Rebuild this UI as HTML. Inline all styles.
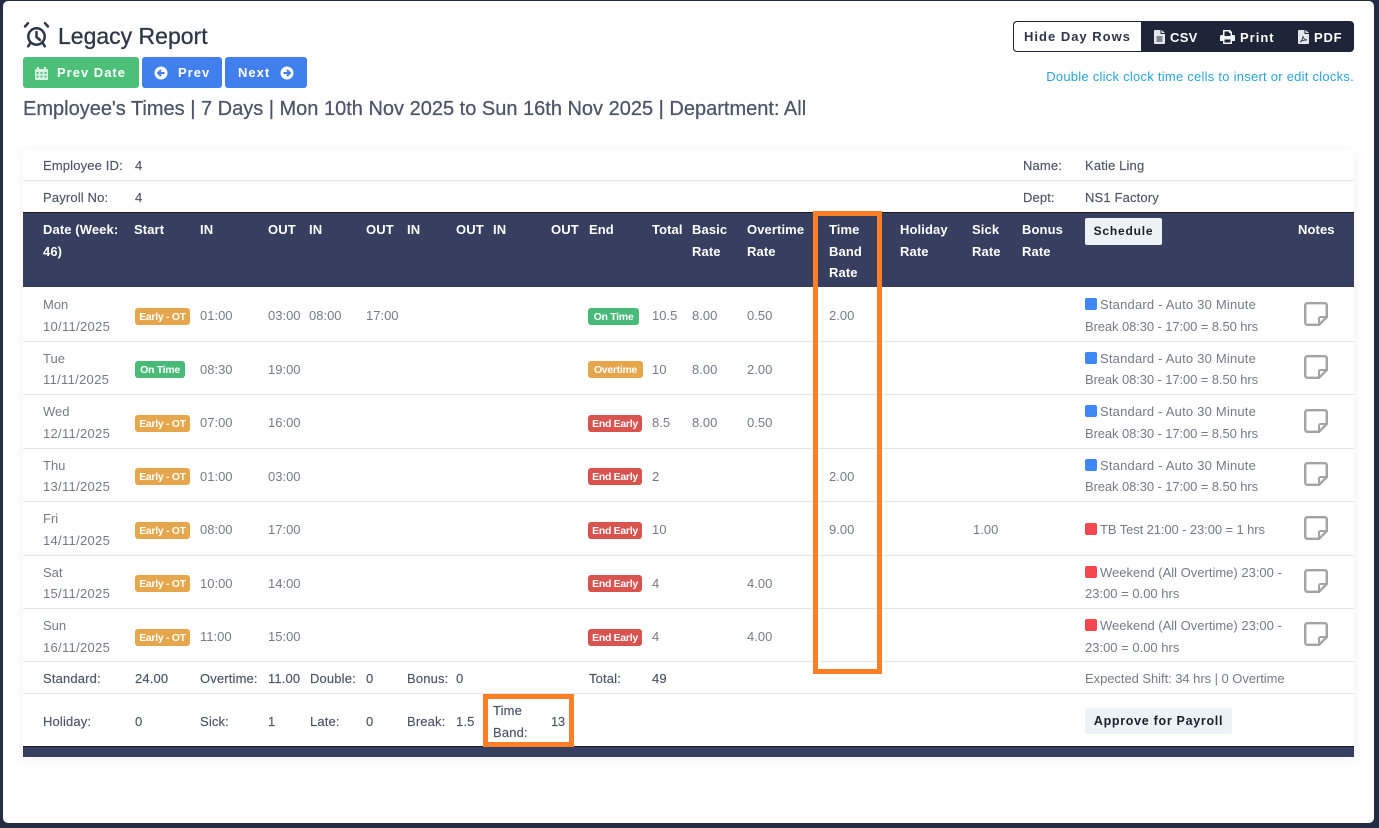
<!DOCTYPE html>
<html>
<head>
<meta charset="utf-8">
<title>Legacy Report</title>
<style>
html,body{margin:0;padding:0;}
body{width:1379px;height:828px;overflow:hidden;background:#232c43;font-family:"Liberation Sans",sans-serif;position:relative;}
#panel{position:absolute;left:3px;top:1px;width:1371px;height:822px;background:#fff;border-radius:5px;}
#card{position:absolute;left:23px;top:150px;width:1331px;height:607px;background:#fff;box-shadow:0 2px 12px rgba(0,0,0,.06);border-radius:4px 4px 0 0;}
.l{position:absolute;left:23px;width:1331px;height:1px;background:#e2e8f0;}
.t{position:absolute;white-space:nowrap;font-size:13px;line-height:20px;height:20px;margin-top:1px;}
.h{color:#fff;font-weight:bold;letter-spacing:.1px;}
.d{color:#747b87;}
.k{color:#4a5568;letter-spacing:.15px;-webkit-text-stroke:.15px #4a5568;}
.s{letter-spacing:.2px;}
.br{letter-spacing:-.1px;}
.dt{letter-spacing:.3px;}
.b{position:absolute;height:17px;line-height:18px;border-radius:3px;color:#fff;font-size:10.500px;font-weight:bold;text-align:center;letter-spacing:-.3px;white-space:nowrap;}
.or{background:#e5a64c;}.gr{background:#48bb78;}.re{background:#d9534f;}
.sq{position:absolute;width:12px;height:12px;border-radius:2px;}
.bl{background:#3f87f5;}.rd{background:#f5474f;}
.n{position:absolute;left:1304px;width:24px;height:24px;}
.btn{position:absolute;top:57px;height:31px;border-radius:3px;color:#fff;font-weight:bold;font-size:13px;line-height:32px;letter-spacing:1px;white-space:nowrap;}
.btn svg,.ic{position:absolute;}
.ob{position:absolute;border:5px solid #ff7f27;box-sizing:border-box;}
</style>
</head>
<body>
<svg width="0" height="0" style="position:absolute"><symbol id="note" viewBox="0 0 24 24"><g fill="none" stroke="#a3a3a3" stroke-width="2.400"><path d="M3.500 1.200H20.800A2 2 0 0 1 22.800 3.200V15L15 22.800H3.500A2.300 2.300 0 0 1 1.200 20.500V3.500A2.300 2.300 0 0 1 3.500 1.200Z"/><path d="M22.800 15H16.500A1.500 1.500 0 0 0 15 16.500V22.800" stroke-width="2"/></g></symbol></svg>
<div id="panel"></div>

<svg class="ic" style="left:23px;top:21px" width="27" height="27" viewBox="0 0 27 27" fill="none" stroke="#2d3748" stroke-width="2.500" stroke-linecap="round">
<circle cx="13.500" cy="15.500" r="8.200"/><path d="M13.500 11v5l3.500 3"/><path d="M2 5.500L5 2.200"/><path d="M25 5.500L22 2.200"/><path d="M7 22.500l-1.800 2.800M20 22.500l1.800 2.800"/>
</svg>
<div class="t" style="left:58px;top:21px;height:30px;line-height:30px;font-size:23px;color:#2d3748;margin-top:0;-webkit-text-stroke:.3px #2d3748;">Legacy Report</div>

<div class="btn" style="left:23px;width:116px;background:#4cbf78;">
<svg style="left:12px;top:9px" width="13" height="14" viewBox="0 0 13 14"><path fill="#d9f3e2" fill-rule="evenodd" d="M2 3V1h2v2h5V1h2v2h1a1 1 0 0 1 1 1v9a1 1 0 0 1-1 1H1a1 1 0 0 1-1-1V4a1 1 0 0 1 1-1zM1.500 6v2h2V6zm4 0v2h2V6zm4 0v2h2V6zm-8 3.500v2h2v-2zm4 0v2h2v-2zm4 0v2h2v-2z"/></svg>
<span style="position:absolute;left:34px;">Prev Date</span></div>
<div class="btn" style="left:142px;width:80px;background:#4180ec;">
<svg style="left:12px;top:9px" width="14" height="14" viewBox="0 0 14 14"><circle cx="7" cy="7" r="6.500" fill="#fff"/><path d="M10.500 7H4.500M7 4L4 7l3 3" stroke="#4180ec" stroke-width="2" fill="none"/></svg>
<span style="position:absolute;left:36px;">Prev</span></div>
<div class="btn" style="left:225px;width:82px;background:#4180ec;">
<span style="position:absolute;left:13px;">Next</span>
<svg style="left:55px;top:9px" width="14" height="14" viewBox="0 0 14 14"><circle cx="7" cy="7" r="6.500" fill="#fff"/><path d="M3.500 7H9.500M7 4l3 3-3 3" stroke="#4180ec" stroke-width="2" fill="none"/></svg></div>

<div class="t" style="left:23px;top:95px;height:26px;line-height:26px;font-size:20px;color:#4a5568;-webkit-text-stroke:.25px #4a5568;">Employee's Times | 7 Days | Mon 10th Nov 2025 to Sun 16th Nov 2025 | Department: All</div>

<div style="position:absolute;left:1013px;top:21px;width:341px;height:31px;background:#1f2538;border-radius:4px;"></div>
<div style="position:absolute;left:1013px;top:21px;width:129px;height:31px;box-sizing:border-box;background:#fff;border:1px solid #1f2538;border-radius:4px 0 0 4px;color:#2d3748;font-size:13px;font-weight:bold;line-height:30px;text-align:center;letter-spacing:1px;">Hide Day Rows</div>
<svg class="ic" style="left:1154px;top:30px" width="11" height="14" viewBox="0 0 11 14"><path fill="#e5e7eb" d="M0 1a1 1 0 0 1 1-1h5.500v4H11v9a1 1 0 0 1-1 1H1a1 1 0 0 1-1-1zM7.500 0L11 3H7.500z"/><path d="M2.500 7h6M2.500 9h6M2.500 11h6" stroke="#1f2538"/></svg>
<div class="t" style="left:1170px;top:27px;color:#fff;font-weight:bold;letter-spacing:.3px;">CSV</div>
<svg class="ic" style="left:1220px;top:30px" width="15" height="14" viewBox="0 0 15 14"><path fill="#f3f4f6" d="M3 0h7l2 2v3h1.500A1.500 1.500 0 0 1 15 6.500V11h-3v3H3v-3H0V6.500A1.500 1.500 0 0 1 1.500 5H3zM4.500 1.500V6h6V3h-1.500V1.500zM4.500 9.500v3h6v-3z"/></svg>
<div class="t" style="left:1240px;top:27px;color:#fff;font-weight:bold;letter-spacing:1px;">Print</div>
<svg class="ic" style="left:1298px;top:30px" width="11" height="14" viewBox="0 0 11 14"><path fill="#e5e7eb" d="M0 1a1 1 0 0 1 1-1h5.500v4H11v9a1 1 0 0 1-1 1H1a1 1 0 0 1-1-1zM7.500 0L11 3H7.500z"/><path d="M2 12c2-1 3-4 3-6 0 2 2 4 4 4-2 0-5 .5-7 2z" fill="none" stroke="#1f2538" stroke-width=".8"/></svg>
<div class="t" style="left:1314px;top:27px;color:#fff;font-weight:bold;letter-spacing:.8px;">PDF</div>
<div class="t" style="right:25px;top:66px;color:#2aa3d9;font-size:13px;letter-spacing:.25px;">Double click clock time cells to insert or edit clocks.</div>

<div id="card"></div>
<div class="l" style="top:180px"></div>
<div class="t k" style="left:43px;top:155px">Employee ID:</div><div class="t k" style="left:135px;top:155px">4</div>
<div class="t k" style="left:1023px;top:155px">Name:</div><div class="t k" style="left:1085px;top:155px">Katie Ling</div>
<div class="t k" style="left:43px;top:187px">Payroll No:</div><div class="t k" style="left:135px;top:187px">4</div>
<div class="t k" style="left:1023px;top:187px">Dept:</div><div class="t k" style="left:1085px;top:187px">NS1 Factory</div>

<div style="position:absolute;left:23px;top:212px;width:1331px;height:75px;background:#363f5f;border-top:1px solid #1a1a1a;box-sizing:border-box;"></div>
<div class="t h" style="left:43px;top:219px">Date (Week:</div><div class="t h" style="left:43px;top:241px">46)</div>
<div class="t h" style="left:134px;top:219px">Start</div>
<div class="t h" style="left:200px;top:219px">IN</div>
<div class="t h" style="left:268px;top:219px">OUT</div>
<div class="t h" style="left:309px;top:219px">IN</div>
<div class="t h" style="left:366px;top:219px">OUT</div>
<div class="t h" style="left:407px;top:219px">IN</div>
<div class="t h" style="left:456px;top:219px">OUT</div>
<div class="t h" style="left:493px;top:219px">IN</div>
<div class="t h" style="left:551px;top:219px">OUT</div>
<div class="t h" style="left:589px;top:219px">End</div>
<div class="t h" style="left:652px;top:219px">Total</div>
<div class="t h" style="left:692px;top:219px">Basic</div><div class="t h" style="left:692px;top:241px">Rate</div>
<div class="t h" style="left:747px;top:219px">Overtime</div><div class="t h" style="left:747px;top:241px">Rate</div>
<div class="t h" style="left:829px;top:219px">Time</div><div class="t h" style="left:829px;top:241px">Band</div><div class="t h" style="left:829px;top:262px">Rate</div>
<div class="t h" style="left:900px;top:219px">Holiday</div><div class="t h" style="left:900px;top:241px">Rate</div>
<div class="t h" style="left:972px;top:219px">Sick</div><div class="t h" style="left:972px;top:241px">Rate</div>
<div class="t h" style="left:1022px;top:219px">Bonus</div><div class="t h" style="left:1022px;top:241px">Rate</div>
<div style="position:absolute;left:1085px;top:218px;width:77px;height:27px;background:#edf2f7;border-radius:2px;color:#1a202c;font-size:12px;font-weight:bold;line-height:27px;text-align:center;letter-spacing:.8px;">Schedule</div>
<div class="t h" style="left:1298px;top:219px">Notes</div>

<!-- Mon -->
<div class="t d" style="left:43px;top:294px">Mon</div><div class="t d dt" style="left:43px;top:316px">10/11/2025</div>
<div class="b or" style="left:135px;top:308px;width:55px">Early - OT</div>
<div class="t d" style="left:200px;top:305px">01:00</div><div class="t d" style="left:268px;top:305px">03:00</div><div class="t d" style="left:309px;top:305px">08:00</div><div class="t d" style="left:366px;top:305px">17:00</div>
<div class="b gr" style="left:588px;top:308px;width:51px">On Time</div>
<div class="t d" style="left:652px;top:305px">10.5</div><div class="t d" style="left:692px;top:305px">8.00</div><div class="t d" style="left:747px;top:305px">0.50</div><div class="t d" style="left:829px;top:305px">2.00</div>
<div class="sq bl" style="left:1085px;top:298px"></div><div class="t d s" style="left:1100px;top:294px">Standard - Auto 30 Minute</div><div class="t d br" style="left:1085px;top:316px">Break 08:30 - 17:00 = 8.50 hrs</div>
<svg class="n" style="top:302px"><use href="#note"/></svg>
<div class="l" style="top:341px"></div>

<!-- Tue -->
<div class="t d" style="left:43px;top:348px">Tue</div><div class="t d dt" style="left:43px;top:369px">11/11/2025</div>
<div class="b gr" style="left:135px;top:361px;width:50px">On Time</div>
<div class="t d" style="left:200px;top:359px">08:30</div><div class="t d" style="left:268px;top:359px">19:00</div>
<div class="b or" style="left:588px;top:361px;width:55px">Overtime</div>
<div class="t d" style="left:652px;top:359px">10</div><div class="t d" style="left:692px;top:359px">8.00</div><div class="t d" style="left:747px;top:359px">2.00</div>
<div class="sq bl" style="left:1085px;top:352px"></div><div class="t d s" style="left:1100px;top:348px">Standard - Auto 30 Minute</div><div class="t d br" style="left:1085px;top:369px">Break 08:30 - 17:00 = 8.50 hrs</div>
<svg class="n" style="top:355px"><use href="#note"/></svg>
<div class="l" style="top:394px"></div>

<!-- Wed -->
<div class="t d" style="left:43px;top:401px">Wed</div><div class="t d dt" style="left:43px;top:423px">12/11/2025</div>
<div class="b or" style="left:135px;top:415px;width:55px">Early - OT</div>
<div class="t d" style="left:200px;top:412px">07:00</div><div class="t d" style="left:268px;top:412px">16:00</div>
<div class="b re" style="left:588px;top:415px;width:54px">End Early</div>
<div class="t d" style="left:652px;top:412px">8.5</div><div class="t d" style="left:692px;top:412px">8.00</div><div class="t d" style="left:747px;top:412px">0.50</div>
<div class="sq bl" style="left:1085px;top:405px"></div><div class="t d s" style="left:1100px;top:401px">Standard - Auto 30 Minute</div><div class="t d br" style="left:1085px;top:423px">Break 08:30 - 17:00 = 8.50 hrs</div>
<svg class="n" style="top:409px"><use href="#note"/></svg>
<div class="l" style="top:448px"></div>

<!-- Thu -->
<div class="t d" style="left:43px;top:455px">Thu</div><div class="t d dt" style="left:43px;top:476px">13/11/2025</div>
<div class="b or" style="left:135px;top:468px;width:55px">Early - OT</div>
<div class="t d" style="left:200px;top:466px">01:00</div><div class="t d" style="left:268px;top:466px">03:00</div>
<div class="b re" style="left:588px;top:468px;width:54px">End Early</div>
<div class="t d" style="left:652px;top:466px">2</div><div class="t d" style="left:829px;top:466px">2.00</div>
<div class="sq bl" style="left:1085px;top:459px"></div><div class="t d s" style="left:1100px;top:455px">Standard - Auto 30 Minute</div><div class="t d br" style="left:1085px;top:476px">Break 08:30 - 17:00 = 8.50 hrs</div>
<svg class="n" style="top:462px"><use href="#note"/></svg>
<div class="l" style="top:501px"></div>

<!-- Fri -->
<div class="t d" style="left:43px;top:508px">Fri</div><div class="t d dt" style="left:43px;top:530px">14/11/2025</div>
<div class="b or" style="left:135px;top:522px;width:55px">Early - OT</div>
<div class="t d" style="left:200px;top:519px">08:00</div><div class="t d" style="left:268px;top:519px">17:00</div>
<div class="b re" style="left:588px;top:522px;width:54px">End Early</div>
<div class="t d" style="left:652px;top:519px">10</div><div class="t d" style="left:829px;top:519px">9.00</div><div class="t d" style="left:973px;top:519px">1.00</div>
<div class="sq rd" style="left:1085px;top:523px"></div><div class="t d br" style="left:1100px;top:519px">TB Test 21:00 - 23:00 = 1 hrs</div>
<svg class="n" style="top:516px"><use href="#note"/></svg>
<div class="l" style="top:555px"></div>

<!-- Sat -->
<div class="t d" style="left:43px;top:562px">Sat</div><div class="t d dt" style="left:43px;top:583px">15/11/2025</div>
<div class="b or" style="left:135px;top:575px;width:55px">Early - OT</div>
<div class="t d" style="left:200px;top:573px">10:00</div><div class="t d" style="left:268px;top:573px">14:00</div>
<div class="b re" style="left:588px;top:575px;width:54px">End Early</div>
<div class="t d" style="left:652px;top:573px">4</div><div class="t d" style="left:747px;top:573px">4.00</div>
<div class="sq rd" style="left:1085px;top:566px"></div><div class="t d" style="left:1100px;top:562px">Weekend (All Overtime) 23:00 -</div><div class="t d" style="left:1085px;top:583px">23:00 = 0.00 hrs</div>
<svg class="n" style="top:569px"><use href="#note"/></svg>
<div class="l" style="top:608px"></div>

<!-- Sun -->
<div class="t d" style="left:43px;top:615px">Sun</div><div class="t d dt" style="left:43px;top:637px">16/11/2025</div>
<div class="b or" style="left:135px;top:629px;width:55px">Early - OT</div>
<div class="t d" style="left:200px;top:626px">11:00</div><div class="t d" style="left:268px;top:626px">15:00</div>
<div class="b re" style="left:588px;top:629px;width:54px">End Early</div>
<div class="t d" style="left:652px;top:626px">4</div><div class="t d" style="left:747px;top:626px">4.00</div>
<div class="sq rd" style="left:1085px;top:619px"></div><div class="t d" style="left:1100px;top:615px">Weekend (All Overtime) 23:00 -</div><div class="t d" style="left:1085px;top:637px">23:00 = 0.00 hrs</div>
<svg class="n" style="top:622px"><use href="#note"/></svg>
<div class="l" style="top:661px"></div>

<!-- Totals -->
<div class="t k" style="left:43px;top:668px">Standard:</div><div class="t k" style="left:135px;top:668px">24.00</div>
<div class="t k" style="left:200px;top:668px">Overtime:</div><div class="t k" style="left:268px;top:668px">11.00</div>
<div class="t k" style="left:310px;top:668px">Double:</div><div class="t k" style="left:366px;top:668px">0</div>
<div class="t k" style="left:407px;top:668px">Bonus:</div><div class="t k" style="left:456px;top:668px">0</div>
<div class="t k" style="left:589px;top:668px">Total:</div><div class="t k" style="left:652px;top:668px">49</div>
<div class="t d" style="left:1085px;top:668px;letter-spacing:-.05px">Expected Shift: 34 hrs | 0 Overtime</div>
<div class="l" style="top:693px"></div>

<div class="t k" style="left:43px;top:711px">Holiday:</div><div class="t k" style="left:135px;top:711px">0</div>
<div class="t k" style="left:200px;top:711px">Sick:</div><div class="t k" style="left:268px;top:711px">1</div>
<div class="t k" style="left:310px;top:711px">Late:</div><div class="t k" style="left:366px;top:711px">0</div>
<div class="t k" style="left:407px;top:711px">Break:</div><div class="t k" style="left:456px;top:711px">1.5</div>
<div class="t k" style="left:493px;top:700px">Time</div><div class="t k" style="left:493px;top:722px">Band:</div><div class="t k" style="left:551px;top:711px;letter-spacing:-.3px">13</div>
<div style="position:absolute;left:1085px;top:708px;width:147px;height:26px;background:#edf2f7;border-radius:2px;color:#1a202c;font-size:12.500px;font-weight:bold;line-height:26px;text-align:center;letter-spacing:.7px;">Approve for Payroll</div>

<div style="position:absolute;left:23px;top:746px;width:1331px;height:11px;background:#363f5f;border-top:1px solid #1a1a1a;box-sizing:border-box;"></div>

<div class="ob" style="left:813px;top:211px;width:69px;height:463px;"></div>
<div class="ob" style="left:483px;top:694px;width:91px;height:53px;"></div>
</body>
</html>
